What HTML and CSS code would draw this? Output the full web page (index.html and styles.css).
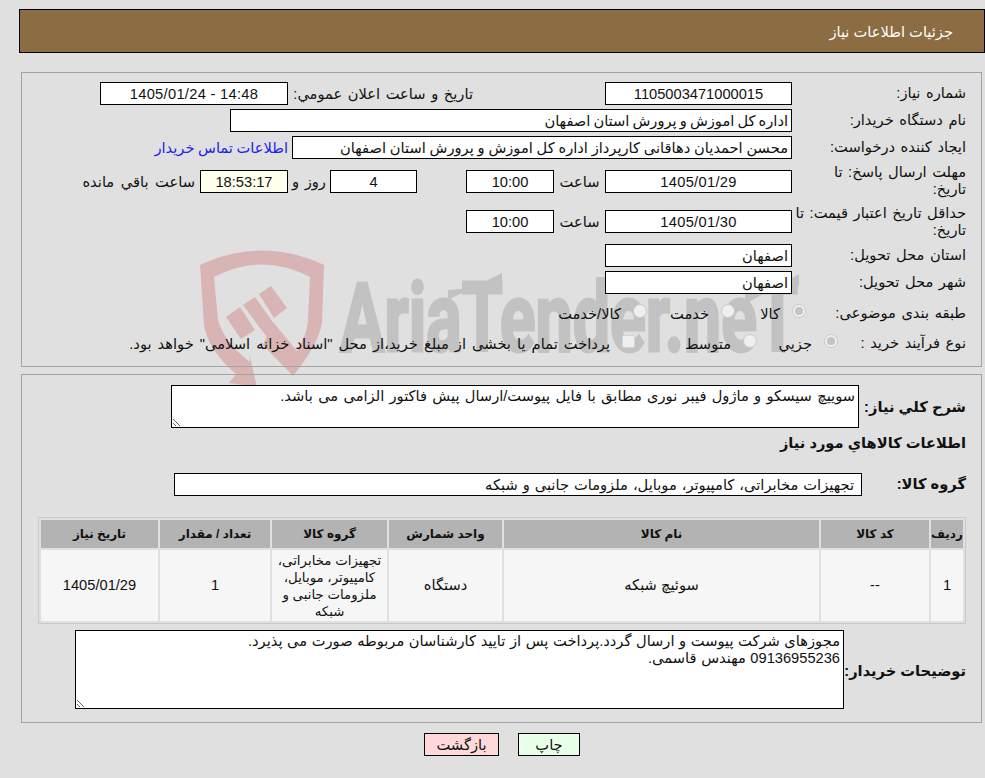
FILE: index.html
```html
<!DOCTYPE html>
<html lang="fa" dir="rtl">
<head>
<meta charset="utf-8">
<title>جزئیات اطلاعات نیاز</title>
<link rel="stylesheet" href="styles.css">
</head>
<body>
<svg class="watermark" width="700" height="170" viewBox="190 240 700 170" aria-hidden="true">
  <g fill="#d8b4b4">
    <path d="M200 265 Q262 236 324 265 L322 323 Q318 345 293 376 L263 345 L273 322 L297 351 Q307 335 308 320 L310 277 Q262 252 214 277 L218 320 Q224 342 250 362 L249 353 L257 387 L229 383 L236 374 Q208 350 204 325 Z"/>
    <path d="M259 294 L271 286 L287 308 L274 318 Z"/>
    <path d="M243 305 L255 297 L272 321 L297 356 L288 364 L260 328 Z"/>
    <path d="M226 317 L240 307 L255 330 L241 339 Z"/>
  </g>
  <text class="wm-text" x="340" y="351" textLength="458" lengthAdjust="spacingAndGlyphs">AriaTender.neT</text>
  <path class="wm-bar" d="M448 300 L502 273 L502 286 L448 290 Z"/>
  <path class="wm-bar" d="M745 304 L799 274 L799 286 L745 292 Z"/>
</svg>
<div class="page">
  <header class="title-bar"><span>جزئیات اطلاعات نیاز</span></header>

  <section class="panel panel-top">
    <div class="row h28">
      <div class="label">شماره نیاز:</div>
      <div class="field w187 center">1105003471000015</div>
      <div class="text-cell w185 ml132">تاریخ و ساعت اعلان عمومي:</div>
      <div class="field w188 center ws-date" dir="ltr">1405/01/24 - 14:48</div>
    </div>
    <div class="row h27">
      <div class="label">نام دستگاه خریدار:</div>
      <div class="field w562">اداره کل اموزش و پرورش استان اصفهان</div>
    </div>
    <div class="row h27">
      <div class="label">ایجاد کننده درخواست:</div>
      <div class="field w500">محسن احمدیان دهاقانی کارپرداز اداره کل اموزش و پرورش استان اصفهان</div>
      <a class="link" href="#">اطلاعات تماس خریدار</a>
    </div>
    <div class="row h40">
      <div class="label">مهلت ارسال پاسخ: تا<br>تاریخ:</div>
      <div class="field w187 center ws-date">1405/01/29</div>
      <div class="unit w51">ساعت</div>
      <div class="field w88 center">10:00</div>
      <div class="field w87 center gap49">4</div>
      <div class="unit w42">روز و</div>
      <div class="field w88 center cream">18:53:17</div>
      <div class="remain">ساعت باقي مانده</div>
    </div>
    <div class="row h41">
      <div class="label">حداقل تاریخ اعتبار قیمت: تا<br>تاریخ:</div>
      <div class="field w187 center ws-date">1405/01/30</div>
      <div class="unit w51">ساعت</div>
      <div class="field w88 center">10:00</div>
    </div>
    <div class="row h27">
      <div class="label">استان محل تحویل:</div>
      <div class="field w187">اصفهان</div>
    </div>
    <div class="row h27">
      <div class="label">شهر محل تحویل:</div>
      <div class="field w187">اصفهان</div>
    </div>
    <div class="row h34">
      <div class="label narrow-a">طبقه بندی موضوعی:</div>
      <div class="option w71"><span class="radio checked"></span>کالا</div>
      <div class="option w88"><span class="radio"></span>خدمت</div>
      <div class="option"><span class="radio"></span>کالا/خدمت</div>
    </div>
    <div class="row h26">
      <div class="label narrow-b">نوع فرآیند خرید :</div>
      <div class="option w81"><span class="radio checked"></span>جزيي</div>
      <div class="option w122"><span class="radio"></span>متوسط</div>
      <div class="option ws-long"><span class="check"></span>پرداخت تمام یا بخشی از مبلغ خرید،از محل "اسناد خزانه اسلامی" خواهد بود.</div>
    </div>
  </section>

  <section class="panel panel-bottom">
    <div class="row h43">
      <div class="label strong label-desc">شرح کلي نیاز:</div>
      <textarea class="area area-need" readonly>سوییچ سیسکو و ماژول فیبر نوری مطابق با فایل پیوست/ارسال پیش فاکتور الزامی می باشد.</textarea>
    </div>
    <h2 class="section-title">اطلاعات کالاهاي مورد نیاز</h2>
    <div class="row h23">
      <div class="label strong label-group">گروه کالا:</div>
      <div class="field w688 pad-group">تجهیزات مخابراتی، کامپیوتر، موبایل، ملزومات جانبی و شبکه</div>
    </div>
    <table class="items">
      <thead>
        <tr>
          <th class="c1">ردیف</th><th class="c2">کد کالا</th><th class="c3">نام کالا</th><th class="c4">واحد شمارش</th><th class="c5">گروه کالا</th><th class="c6">تعداد / مقدار</th><th class="c7">تاریخ نیاز</th>
        </tr>
      </thead>
      <tbody>
        <tr>
          <td>1</td><td>--</td><td>سوئیچ شبکه</td><td>دستگاه</td><td class="group-cell">تجهیزات مخابراتی،<br>کامپیوتر، موبایل،<br>ملزومات جانبی و<br>شبکه</td><td>1</td><td>1405/01/29</td>
        </tr>
      </tbody>
    </table>
    <div class="row h79">
      <div class="label strong label-notes">توضیحات خریدار:</div>
      <textarea class="area area-notes" readonly>مجوزهای شرکت پیوست و ارسال گردد.پرداخت پس از تایید کارشناسان مربوطه صورت می پذیرد.
09136955236 مهندس قاسمی.</textarea>
    </div>
  </section>

  <div class="actions">
    <button class="btn btn-print" type="button">چاپ</button>
    <button class="btn btn-back" type="button">بازگشت</button>
  </div>
</div>
</body>
</html>
```
FILE: styles.css
```css
html { background: #e0e0e0; }
body {
  margin: 0;
  position: relative;
  font-family: "Liberation Sans", "DejaVu Sans", sans-serif;
  font-size: 14.67px;
  word-spacing: 1.5px;
  color: #111;
  height: 778px;
  overflow: hidden;
}
.watermark { position: absolute; left: 190px; top: 240px; z-index: 0; direction: ltr; }
.wm-text { font-family: Roboto, sans-serif; font-weight: 700; font-size: 96px; fill: #c2c2c2; stroke: #c2c2c2; stroke-width: 3px; direction: ltr; word-spacing: 0; }
.wm-bar { fill: #c2c2c2; }
.page { position: relative; z-index: 1; padding: 9px 0 0 19px; }
.title-bar {
  height: 44px;
  box-sizing: border-box;
  border: 1px solid #000;
  background: #8c6c42;
  color: #fff;
  display: flex;
  align-items: center;
  padding-right: 31px;
  word-spacing: 0;
}
.panel { border: 1px solid #a3a3a3; margin: 0 3px 0 2px; }
.panel-top { margin-top: 19px; height: 295px; box-sizing: border-box; padding-top: 6px; }
.panel-bottom { margin-top: 7px; height: 349px; box-sizing: border-box; padding-top: 10px; }
.row { display: flex; align-items: center; }
.h23 { height: 23px; } .h26 { height: 26px; } .h27 { height: 27px; } .h28 { height: 28px; }
.h34 { height: 34px; } .h40 { height: 40px; } .h41 { height: 41px; } .h43 { height: 43px; } .h79 { height: 79px; }
.label { width: 174px; padding-right: 15px; flex: none; white-space: nowrap; line-height: 17px; }
.narrow-a { width: 160px; }
.narrow-b { width: 128px; }
.field {
  box-sizing: border-box;
  height: 23px;
  border: 1px solid #000;
  background: #fff;
  line-height: 22px;
  padding: 0 3px;
  white-space: nowrap;
  overflow: hidden;
  flex: none;
  word-spacing: 0;
}
.center { text-align: center; }
.cream { background: #ffffee; }
.w187 { width: 187px; } .w188 { width: 188px; } .w88 { width: 88px; } .w87 { width: 87px; }
.w500 { width: 500px; word-spacing: -0.3px; } .w562 { width: 562px; word-spacing: -1px; } .w688 { width: 688px; }
.w185 { width: 185px; } .w51 { width: 51px; } .w42 { width: 42px; }
.w71 { width: 71px; } .w81 { width: 81px; } .w122 { width: 122px; }
.ws-date { letter-spacing: 0.3px; }
.ml132 { margin-right: 132px; }
.gap49 { margin-right: 49px; }
.text-cell, .unit, .remain { white-space: nowrap; flex: none; }
.unit { text-align: center; }
.remain { margin-right: 5px; word-spacing: 2.5px; }
.link { color: #2222ee; text-decoration: none; margin-right: 4px; white-space: nowrap; word-spacing: -0.5px; }
.option { display: flex; align-items: center; gap: 12px; white-space: nowrap; flex: none; }
.ws-long { word-spacing: 2px; }
.radio {
  width: 14px; height: 14px;
  box-sizing: border-box;
  border: 1px solid #cacaca;
  border-radius: 50%;
  background: #efefef;
  flex: none;
  margin-top: -4px;
  position: relative;
}
.radio.checked::after {
  content: "";
  position: absolute;
  inset: 2px;
  border-radius: 50%;
  background: #c4c4c4;
}
.check {
  width: 13px; height: 13px;
  box-sizing: border-box;
  border: 1px solid #d4d4d4;
  border-radius: 2px;
  background: #efefef;
  flex: none;
  margin-top: -4px;
}
.strong { font-weight: 700; word-spacing: 0; }
.label-desc { width: 107px; padding-right: 15px; padding-top: 2px; }
.label-group { width: 104px; padding-right: 15px; }
.label-notes { width: 122px; padding-right: 15px; padding-top: 3px; }
.area {
  box-sizing: border-box;
  display: block;
  border: 1px solid #000;
  border-radius: 0;
  background: #fff;
  font: inherit;
  color: inherit;
  line-height: 17px;
  padding: 2px 3px;
  outline: none;
  margin: 0;
  flex: none;
  overflow: hidden;
}
.area-need { width: 688px; height: 43px; word-spacing: 1.2px; }
.area-notes { width: 769px; height: 79px; word-spacing: 0.5px; }
.section-title { margin: 4px 15px 0 0; height: 26px; line-height: 22px; font-size: inherit; font-weight: 700; word-spacing: 0; }
.panel-bottom .h23 { margin-top: 15px; }
.pad-group { padding-right: 7px; word-spacing: 0.9px; }
.items {
  width: 928px;
  margin: 21px 15px 6px 0;
  border: 1px solid #c9c9c9;
  border-spacing: 2px;
  table-layout: fixed;
  text-align: center;
  word-spacing: 0;
}
.items th {
  background: #b3b3b3;
  height: 28px;
  padding: 0;
  font-size: 12px;
  font-weight: 700;
}
.items td {
  background: #f6f6f6;
  height: 71px;
  padding: 0;
  line-height: 17px;
}
.items .group-cell { font-size: 13.33px; white-space: nowrap; }
.c1 { width: 32px; } .c2 { width: 108px; } .c3 { width: 315px; } .c4 { width: 113px; } .c5 { width: 115px; } .c6 { width: 110px; } .c7 { width: 117px; }
.actions { display: flex; justify-content: center; gap: 19px; margin-top: 10px; }
.btn {
  box-sizing: border-box;
  height: 23px;
  border: 1px solid #000;
  border-radius: 0;
  font: inherit;
  word-spacing: inherit;
  color: inherit;
  padding: 0;
}
.btn-print { width: 62px; background: #e8ffe8; }
.btn-back { width: 75px; background: #ffd9d9; }
```
